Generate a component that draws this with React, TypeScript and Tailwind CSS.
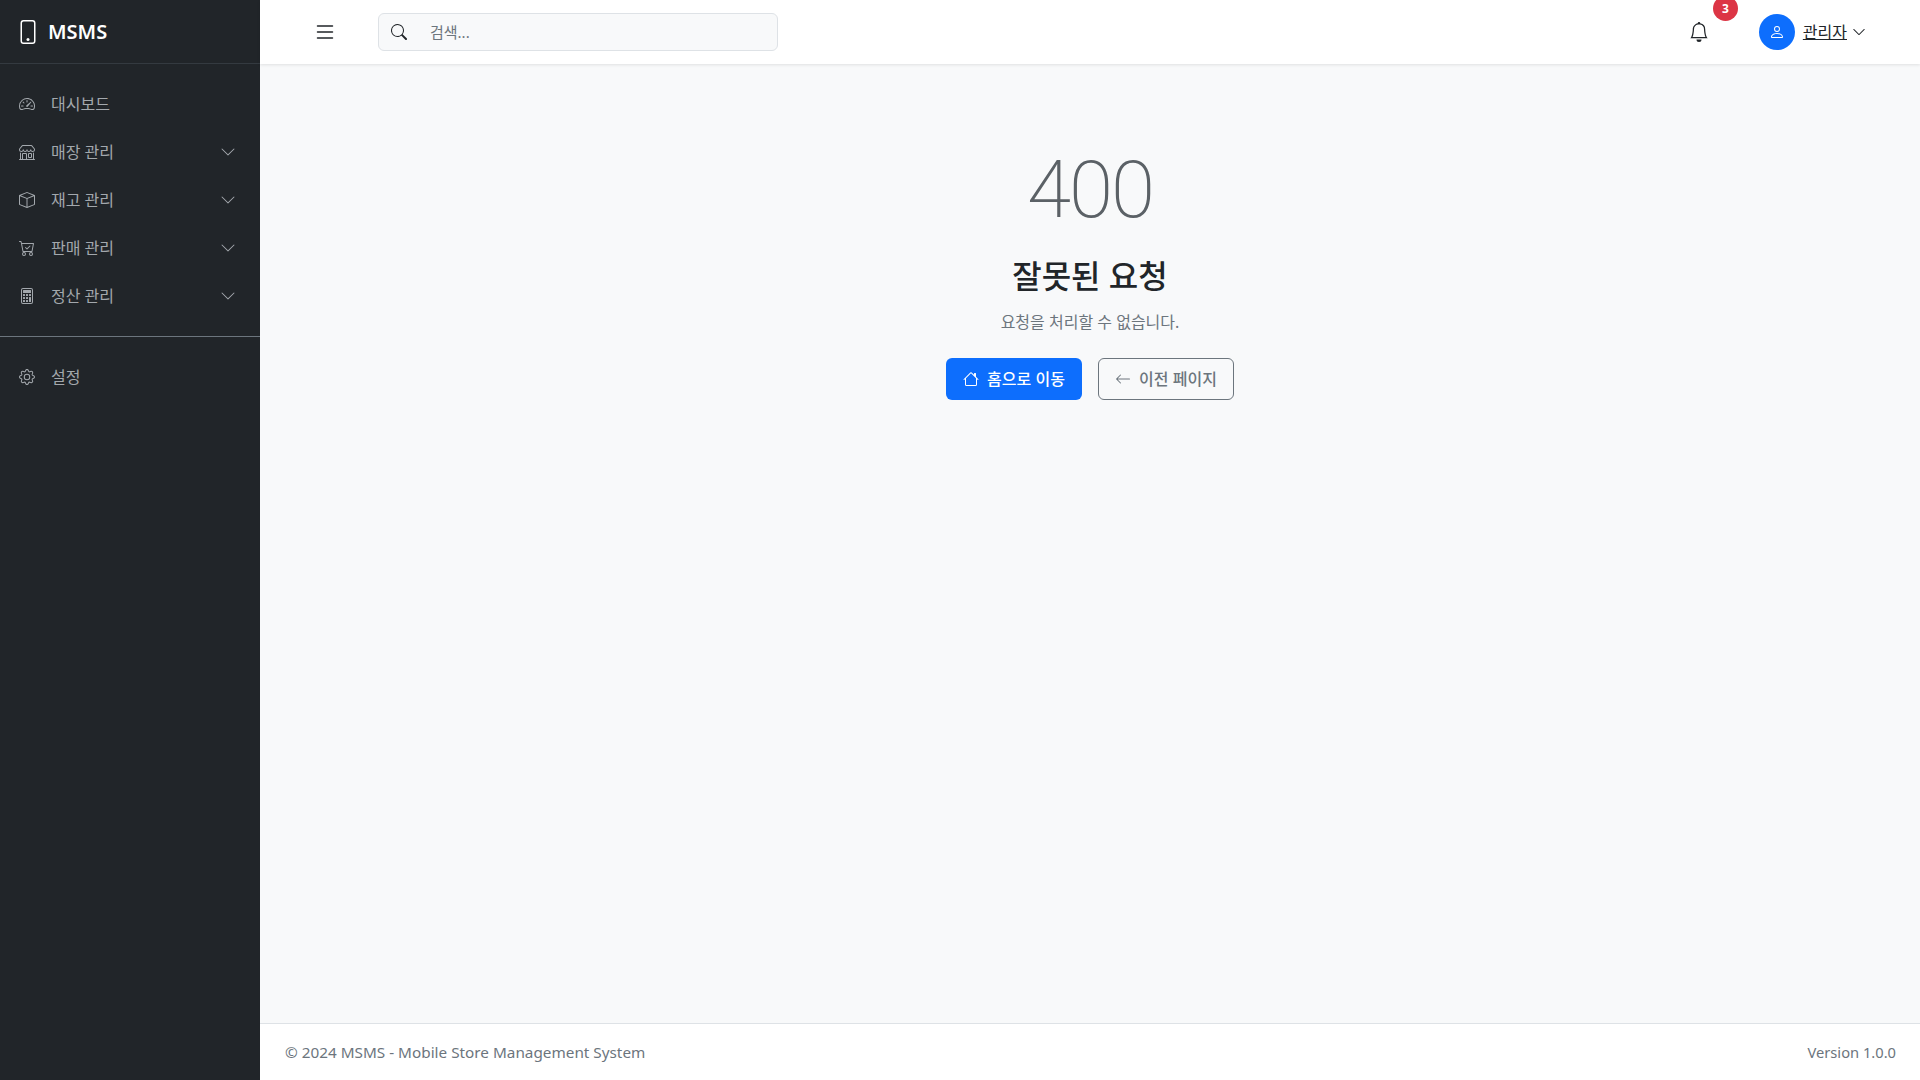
import type { ReactNode } from 'react';
import {
  BsArrowLeft,
  BsBell,
  BsBox,
  BsCalculator,
  BsCartCheck,
  BsChevronDown,
  BsGear,
  BsHouse,
  BsList,
  BsPerson,
  BsPhone,
  BsSearch,
  BsShop,
  BsSpeedometer2,
} from 'react-icons/bs';

const font = "font-['Noto_Sans','Noto_Sans_CJK_KR',sans-serif]";

function NavItem({ icon, label, chevron }: { icon: ReactNode; label: string; chevron?: boolean }) {
  return (
    <a className="flex h-12 items-center pl-[19px] pr-6 text-[16px] text-[#a3a8ad]">
      <span className="mr-4 flex w-[16px] justify-center text-[16px]">{icon}</span>
      <span className="flex-1">{label}</span>
      {chevron && <BsChevronDown className="size-[16px]" />}
    </a>
  );
}

export default function App() {
  return (
    <div className={`flex h-screen bg-[#f8f9fa] text-[#212529] ${font}`}>
      <aside className="flex w-[260px] shrink-0 flex-col bg-[#212529]">
        <div className="flex h-16 items-center border-b border-[#343a40] pl-4 text-white">
          <BsPhone className="mr-[8px] size-[24px]" />
          <span className="text-[20px] font-semibold">MSMS</span>
        </div>
        <nav className="pt-4">
          <NavItem icon={<BsSpeedometer2 />} label="대시보드" />
          <NavItem icon={<BsShop />} label="매장 관리" chevron />
          <NavItem icon={<BsBox />} label="재고 관리" chevron />
          <NavItem icon={<BsCartCheck />} label="판매 관리" chevron />
          <NavItem icon={<BsCalculator />} label="정산 관리" chevron />
          <hr className="my-4 border-t border-[#6c757d]" />
          <NavItem icon={<BsGear />} label="설정" />
        </nav>
      </aside>

      <div className="flex min-w-0 flex-1 flex-col">
        <header className="flex h-16 shrink-0 items-center bg-white pl-[53px] pr-[54px] shadow-[0_1px_3px_rgba(0,0,0,0.1)]">
          <BsList className="size-[24px] text-[#212529]" />
          <div className="ml-[41px] flex h-[38px] w-[400px] items-center rounded-md border border-[#dee2e6] bg-[#f8f9fa] pl-3">
            <BsSearch className="size-[16px]" />
            <span className="ml-[23px] text-[15px] text-[#6c757d]">검색...</span>
          </div>
          <div className="relative ml-auto mr-[50px] flex">
            <BsBell className="size-[20px]" />
            <span className="absolute -top-[26px] left-[24px] flex size-[25px] items-center justify-center rounded-full bg-[#dc3545] text-[12px] font-bold text-white">
              3
            </span>
          </div>
          <div className="flex items-center">
            <span className="flex size-9 items-center justify-center rounded-full bg-[#0d6efd] text-white">
              <BsPerson className="size-[16px]" />
            </span>
            <span className="ml-2 text-[16px] underline">관리자</span>
            <BsChevronDown className="ml-[5px] size-[14px]" />
          </div>
        </header>

        <main className="flex flex-1 flex-col items-center pt-[78px]">
          <h1 className="font-['Roboto',sans-serif] text-[80px] font-extralight leading-[96px] tracking-[-2px] text-[#5b6166]">400</h1>
          <h2 className="mt-[19px] text-[32px] font-medium leading-[38px]">잘못된 요청</h2>
          <p className="mt-[15px] text-[16px] leading-[24px] text-[#6c757d]">요청을 처리할 수 없습니다.</p>
          <div className="mt-[24px] flex gap-4">
            <a className="flex h-[42px] w-[136px] items-center justify-center rounded-md bg-[#0d6efd] text-[16px] font-medium text-white">
              <BsHouse className="mr-2 size-[16px]" />홈으로 이동
            </a>
            <a className="flex h-[42px] w-[136px] items-center justify-center rounded-md border border-[#6c757d] text-[16px] font-medium text-[#6c757d]">
              <BsArrowLeft className="mr-2 size-[16px]" />이전 페이지
            </a>
          </div>
        </main>

        <footer className="flex h-[57px] shrink-0 items-center justify-between border-t border-[#dee2e6] bg-white pl-[25px] pr-6 text-[#6c757d]">
          <span className="text-[15.3px]">© 2024 MSMS - Mobile Store Management System</span>
          <span className="text-[14.7px]">Version 1.0.0</span>
        </footer>
      </div>
    </div>
  );
}
